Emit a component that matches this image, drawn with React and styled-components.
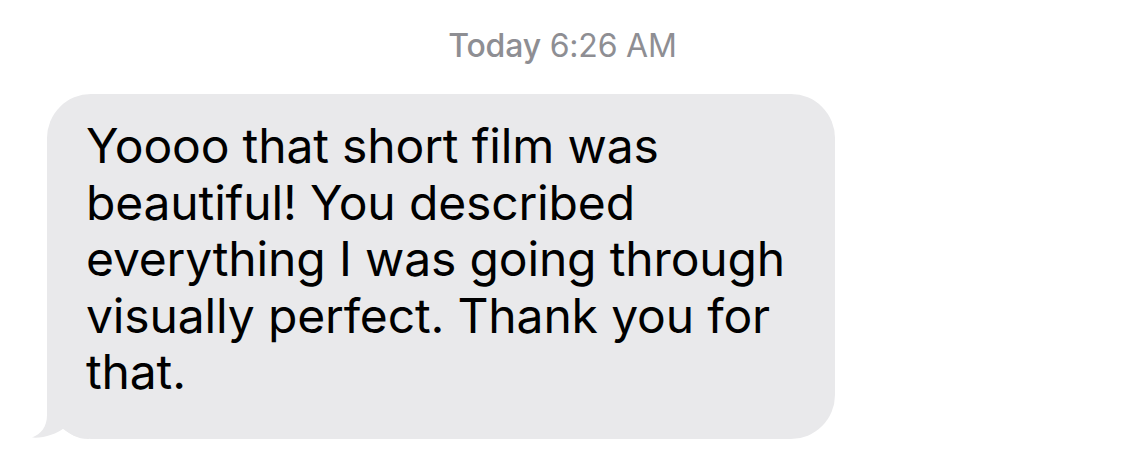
import React from "react";
import styled, { createGlobalStyle } from "styled-components";

const GlobalStyle = createGlobalStyle`
  html, body {
    margin: 0;
    padding: 0;
    background: #ffffff;
    font-family: Inter, "Noto Sans", sans-serif;
    -webkit-font-smoothing: antialiased;
  }
`;

const Thread = styled.div`
  width: 1125px;
  height: 460px;
  box-sizing: border-box;
  padding-top: 27px;
  display: flex;
  flex-direction: column;
  overflow: hidden;
`;

const Stamp = styled.div`
  text-align: center;
  color: #8e8e93;
  font-size: 32px;
  line-height: 37px;
  letter-spacing: -0.2px;
  b {
    font-weight: 500;
  }
`;

const Row = styled.div`
  margin-top: 30px;
  padding-left: 47px;
  display: flex;
`;

const Bubble = styled.div`
  position: relative;
  width: 788px;
  height: 345px;
  box-sizing: border-box;
  padding: 24px 36px 0 39px;
  background: #e9e9eb;
  border-radius: 44px;
  color: #000;
  font-size: 48px;
  line-height: 56.5px;
  letter-spacing: -0.15px;
`;

const Tail = styled.svg`
  position: absolute;
  left: -16px;
  bottom: 0;
  width: 60px;
  height: 50px;
`;

export default function App() {
  return (
    <>
      <GlobalStyle />
      <Thread>
        <Stamp>
          <b>Today</b> 6:26 AM
        </Stamp>
        <Row>
          <Bubble>
            <Tail viewBox="0 0 60 50">
              <path
                d="M16 0 L16 26 C16 38 10 45 1 48.5 C12 49.5 26 45 33 39 C38 45 46 50 58 50 L58 0 Z"
                fill="#e9e9eb"
              />
            </Tail>
            Yoooo that short film was
            <br />
            beautiful! You described
            <br />
            everything I was going through
            <br />
            visually perfect. Thank you for
            <br />
            that.
          </Bubble>
        </Row>
      </Thread>
    </>
  );
}
